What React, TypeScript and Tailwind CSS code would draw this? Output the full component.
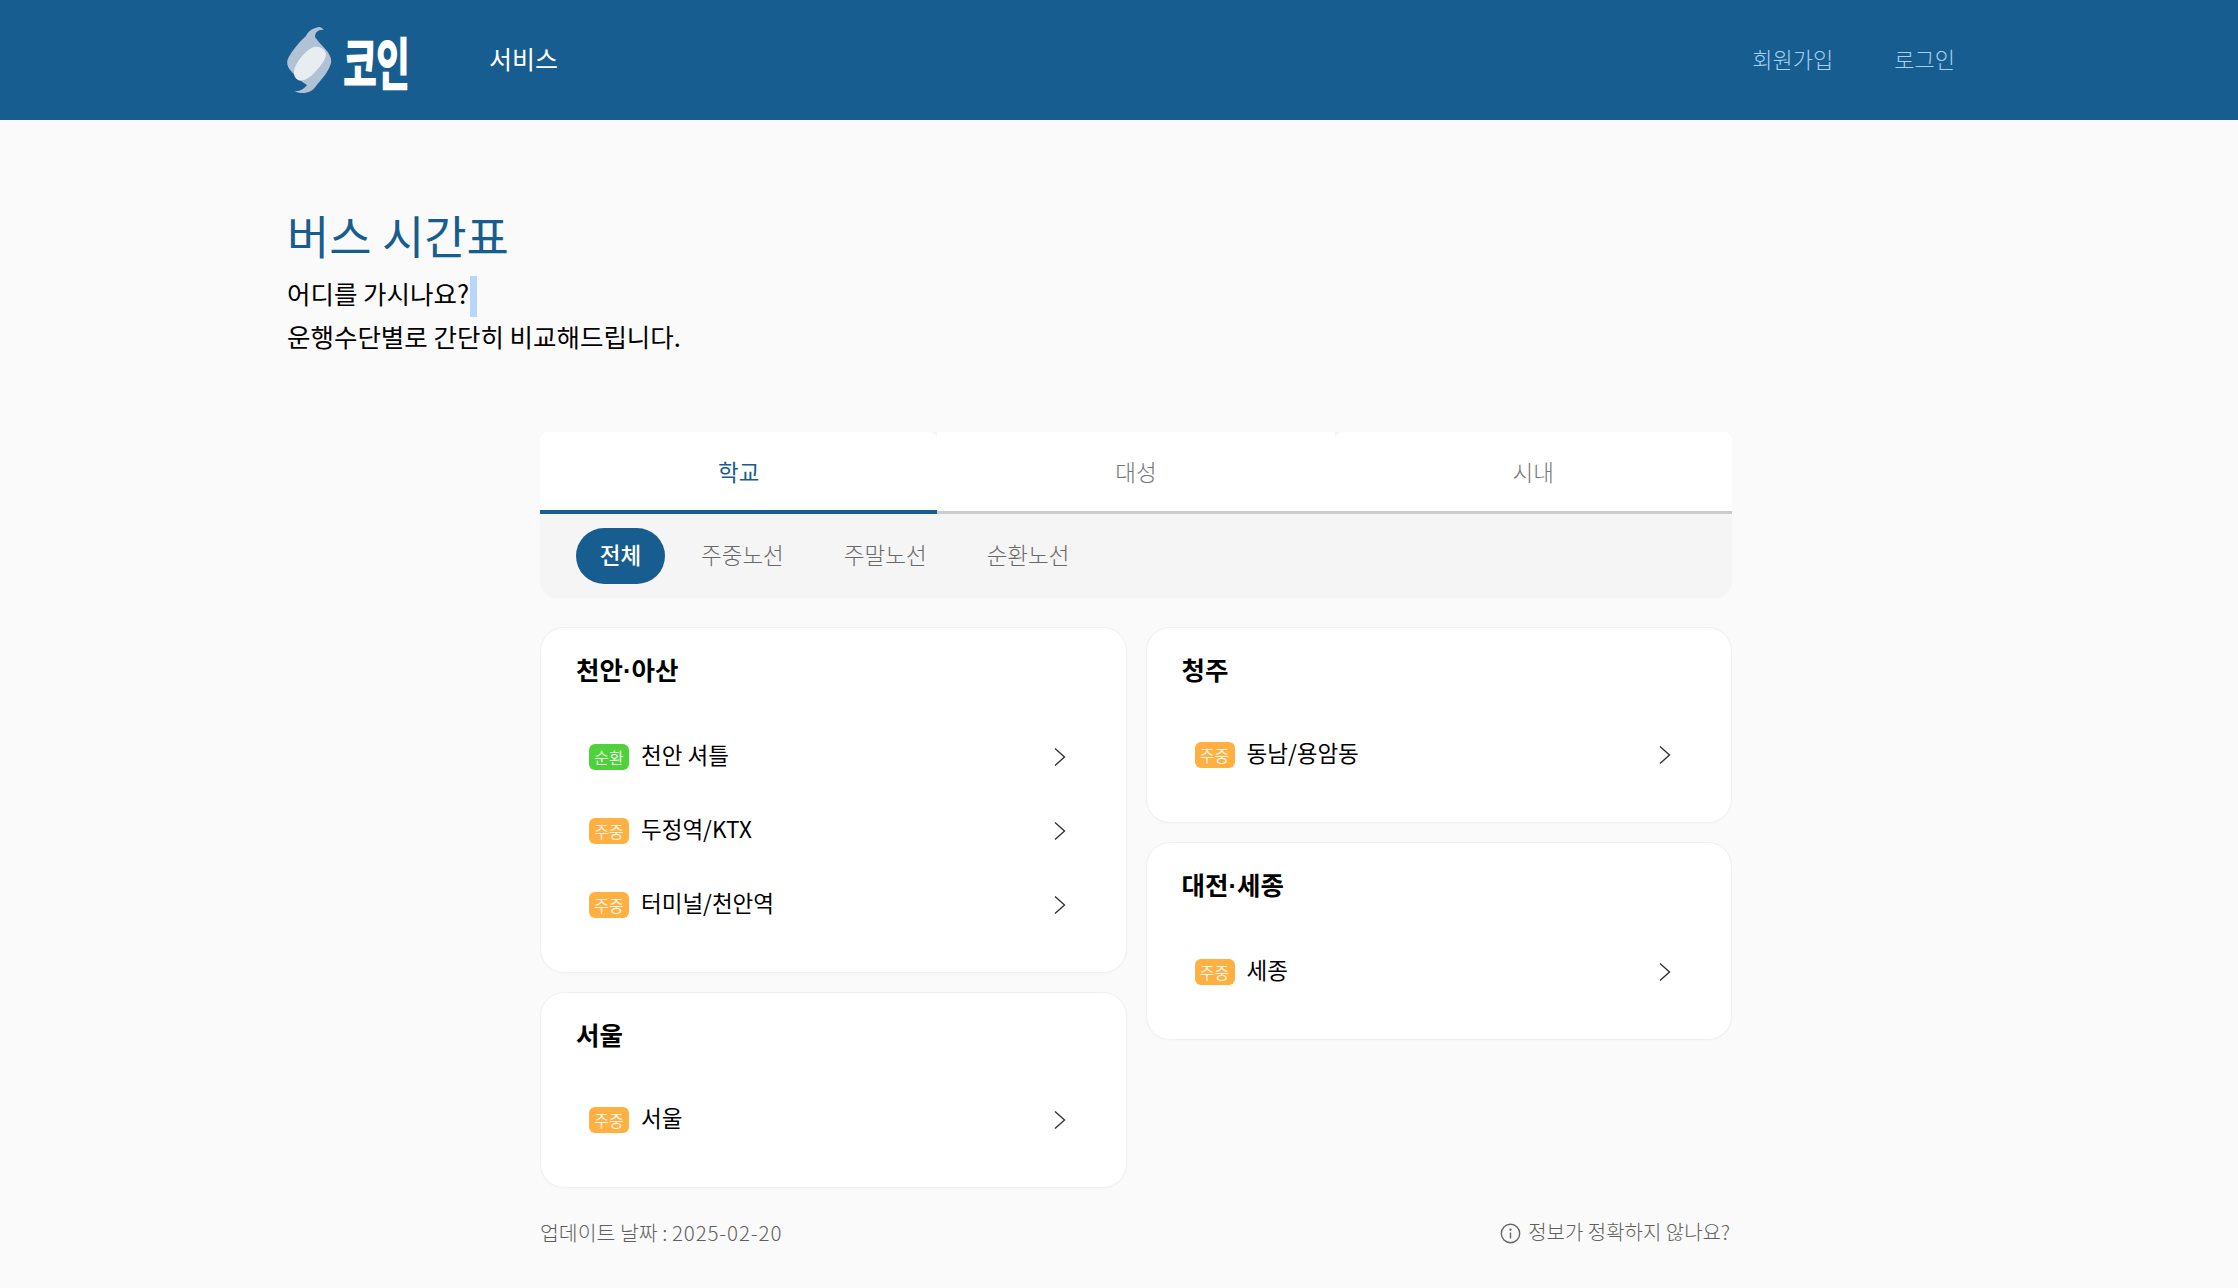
import React from "react";

function Logo() {
  return (
    <div className="flex items-center w-[122px] h-[70px]">
      <svg width="46" height="70" viewBox="0 0 46 70" className="shrink-0">
        <path d="M32 2 C26 3 21 6 19 11 C12 17 3 28 0.500 35 C-0.500 39 1 43 4 46 C9 52 15 57 20 60 C17 64 12 67 7 66 C15 70 25 68 29 61 C35 54 42 46 44 38 C45 33 42 29 40 26 C36 21 31 17 28 12 C28 7 32 4 37 5 C35 3 34 2 32 2 Z" fill="#b1c2d4" />
        <path d="M27 22 C33 21 38 24 39 29 C39 34 34 41 28 47 C23 53 16 57 11 55 C6 52 6 46 9 40 C13 33 20 24 27 22 Z" fill="#e8edf2" />
      </svg>
      <span className="ml-[10px] whitespace-nowrap text-[37px] leading-none font-black text-white scale-y-[1.55] tracking-[-1px]">코인</span>
    </div>
  );
}

function Badge({ kind }: { kind: "주중" | "순환" }) {
  return (
    <span className={`w-[40px] h-[26px] rounded-[6px] shrink-0 flex items-center justify-center text-[16px] leading-none text-white/85 ${kind === "주중" ? "bg-[#ffb040]" : "bg-[#4fd13b]"}`}>
      {kind}
    </span>
  );
}

function Row({ kind, label }: { kind: "주중" | "순환"; label: string }) {
  return (
    <div className="h-[74px] pl-[13px] pr-[24px] flex items-center">
      <Badge kind={kind} />
      <span className="ml-[12px] text-[22.5px] leading-none text-black -mt-[6px]">{label}</span>
      <svg width="14" height="20" viewBox="0 0 14 20" className="ml-auto" fill="none" stroke="#333" strokeWidth="1.4">
        <path d="M2 1.500 L11.500 10 L2 18.500" />
      </svg>
    </div>
  );
}

function Card({ title, rows }: { title: React.ReactNode; rows: { kind: "주중" | "순환"; label: string }[] }) {
  return (
    <div className="bg-white rounded-[24px] border border-[#f0f0f0] pt-[25px] pb-[30px] px-[35px] shadow-[0_1px_2px_rgba(0,0,0,0.02)]">
      <h3 className="text-[25.5px] leading-[32px] font-bold text-black mb-[33px]">{title}</h3>
      {rows.map((r) => (
        <Row key={r.label} {...r} />
      ))}
    </div>
  );
}

const Dot = () => <span className="font-['Liberation_Sans']">·</span>;

export default function App() {
  return (
    <div className="h-[1288px] overflow-hidden bg-[#fafafa] font-['Noto_Sans_CJK_KR','Noto_Sans',sans-serif]">
      <header className="h-[120px] bg-[#185d8f] flex items-center pl-[287px] pr-[283px]">
        <Logo />
        <a className="ml-[80px] text-[25px] font-normal text-white -mt-[2px]">서비스</a>
        <a className="ml-auto text-[22px] font-light text-[#a2d2f6] -mt-[4px]">회원가입</a>
        <a className="ml-[61px] text-[22px] font-light text-[#a2d2f6] -mt-[4px]">로그인</a>
      </header>

      <section className="pl-[287px] pt-[85px]">
        <h1 className="text-[46px] leading-[58px] text-[#185d8f] font-normal">버스 시간표</h1>
        <p className="mt-[8px] text-[25.5px] leading-[43px] text-black font-normal">
          어디를 가시나요?<span className="inline-block align-top relative top-[5px] left-[1px] w-[7px] h-[41px] bg-[#b8d6fb]" />
          <br />
          운행수단별로 간단히 비교해드립니다.
        </p>
      </section>

      <main className="w-[1192px] ml-[540px] mt-[75px]">
        <div className="rounded-[16px] bg-[#f5f5f6]">
          <div className="flex h-[82px]">
            <div className="flex-1 flex items-center justify-center bg-white rounded-t-[8px] border-b-[4px] border-[#185d8f] pt-[2px] text-[22.5px] font-normal text-[#185d8f]">학교</div>
            <div className="flex-1 flex items-center justify-center bg-white border-b-[3px] border-[#cccccc] text-[22.5px] font-light text-[#757575]">대성</div>
            <div className="flex-1 flex items-center justify-center bg-white rounded-t-[8px] border-b-[3px] border-[#cccccc] text-[22.5px] font-light text-[#757575]">시내</div>
          </div>
          <div className="h-[84px] pl-[36px] flex items-center gap-[12px] text-[22.5px] font-light text-[#696969]">
            <span className="w-[89px] h-[56px] pb-[2px] rounded-full bg-[#185d8f] text-white font-medium flex items-center justify-center">전체</span>
            <span className="px-[24px] -mt-[2px]">주중노선</span>
            <span className="px-[24px] -mt-[2px]">주말노선</span>
            <span className="px-[24px] -mt-[2px]">순환노선</span>
          </div>
        </div>

        <div className="flex gap-[19px] mt-[29px] items-start">
          <div className="flex-1 flex flex-col gap-[19px]">
            <Card
              title={<>천안<Dot />아산</>}
              rows={[
                { kind: "순환", label: "천안 셔틀" },
                { kind: "주중", label: "두정역/KTX" },
                { kind: "주중", label: "터미널/천안역" },
              ]}
            />
            <Card title="서울" rows={[{ kind: "주중", label: "서울" }]} />
          </div>
          <div className="flex-1 flex flex-col gap-[19px]">
            <Card title="청주" rows={[{ kind: "주중", label: "동남/용암동" }]} />
            <Card title={<>대전<Dot />세종</>} rows={[{ kind: "주중", label: "세종" }]} />
          </div>
        </div>

        <footer className="mt-[28px] flex items-center justify-between text-[20.5px] leading-[32px] font-light text-[#5f5f5f]">
          <span>업데이트 날짜 : <span className="tracking-[0.9px]">2025-02-20</span></span>
          <span className="flex items-center text-[20px] mr-[2px]">
            <svg width="21" height="21" viewBox="0 0 21 21" fill="none" stroke="#666" strokeWidth="1.4" className="mr-[7px] mt-[2px]">
              <circle cx="10.500" cy="10.500" r="9.200" />
              <path d="M10.500 9.500 V15.500" />
              <circle cx="10.500" cy="6.600" r="0.500" fill="#666" />
            </svg>
            정보가 정확하지 않나요?
          </span>
        </footer>
      </main>
    </div>
  );
}
